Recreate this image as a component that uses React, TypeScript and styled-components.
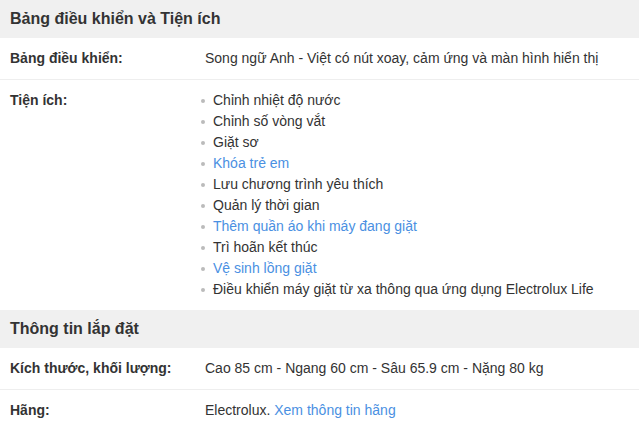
import styled, { createGlobalStyle } from 'styled-components';

const GlobalStyle = createGlobalStyle`
  html, body {
    margin: 0;
    padding: 0;
    background: #fff;
  }
  body {
    font-family: 'Liberation Sans', Arial, sans-serif;
    color: #333;
  }
`;

type Feature = { text: string; link?: boolean };

const features: Feature[] = [
  { text: 'Chỉnh nhiệt độ nước' },
  { text: 'Chỉnh số vòng vắt' },
  { text: 'Giặt sơ' },
  { text: 'Khóa trẻ em', link: true },
  { text: 'Lưu chương trình yêu thích' },
  { text: 'Quản lý thời gian' },
  { text: 'Thêm quần áo khi máy đang giặt', link: true },
  { text: 'Trì hoãn kết thúc' },
  { text: 'Vệ sinh lồng giặt', link: true },
  { text: 'Điều khiển máy giặt từ xa thông qua ứng dụng Electrolux Life' },
];

export default function App() {
  return (
    <>
      <GlobalStyle />
      <Container>
        <SectionTitle>Bảng điều khiển và Tiện ích</SectionTitle>
        <Row>
          <Label>Bảng điều khiển:</Label>
          <Value>Song ngữ Anh - Việt có nút xoay, cảm ứng và màn hình hiển thị</Value>
        </Row>
        <Row $noBorder>
          <Label>Tiện ích:</Label>
          <Value>
            <List>
              {features.map((f) => (
                <Item key={f.text}>
                  <Dot />
                  {f.link ? <Link href="#">{f.text}</Link> : <span>{f.text}</span>}
                </Item>
              ))}
            </List>
          </Value>
        </Row>
        <SectionTitle>Thông tin lắp đặt</SectionTitle>
        <Row>
          <Label>Kích thước, khối lượng:</Label>
          <Value>Cao 85 cm - Ngang 60 cm - Sâu 65.9 cm - Nặng 80 kg</Value>
        </Row>
        <Row $noBorder>
          <Label>Hãng:</Label>
          <Value>
            Electrolux. <Link href="#">Xem thông tin hãng</Link>
          </Value>
        </Row>
      </Container>
    </>
  );
}

const Container = styled.div`
  width: 639px;
  display: flex;
  flex-direction: column;
`;

const SectionTitle = styled.h3`
  margin: 0;
  height: 38px;
  display: flex;
  align-items: center;
  padding: 0 10px;
  background: #f0f0f0;
  font-size: 16px;
  font-weight: 700;
  color: #333;
`;

const Row = styled.div<{ $noBorder?: boolean }>`
  display: grid;
  grid-template-columns: 195px 1fr;
  padding: 10px 10px 10px 10px;
  border-bottom: ${(p) => (p.$noBorder ? 'none' : '1px solid #eee')};
  font-size: 14px;
  line-height: 21px;
`;

const Label = styled.div`
  font-weight: 700;
  color: #333;
`;

const Value = styled.div`
  color: #333;
`;

const List = styled.ul`
  list-style: none;
  margin: 0 0 0 -4px;
  padding: 0;
`;

const Item = styled.li`
  display: flex;
  align-items: center;
  height: 21px;
`;

const Dot = styled.span`
  width: 4px;
  height: 4px;
  border-radius: 50%;
  background: #bbb;
  margin-right: 8px;
  flex-shrink: 0;
`;

const Link = styled.a`
  color: #4a90e2;
  text-decoration: none;
`;
